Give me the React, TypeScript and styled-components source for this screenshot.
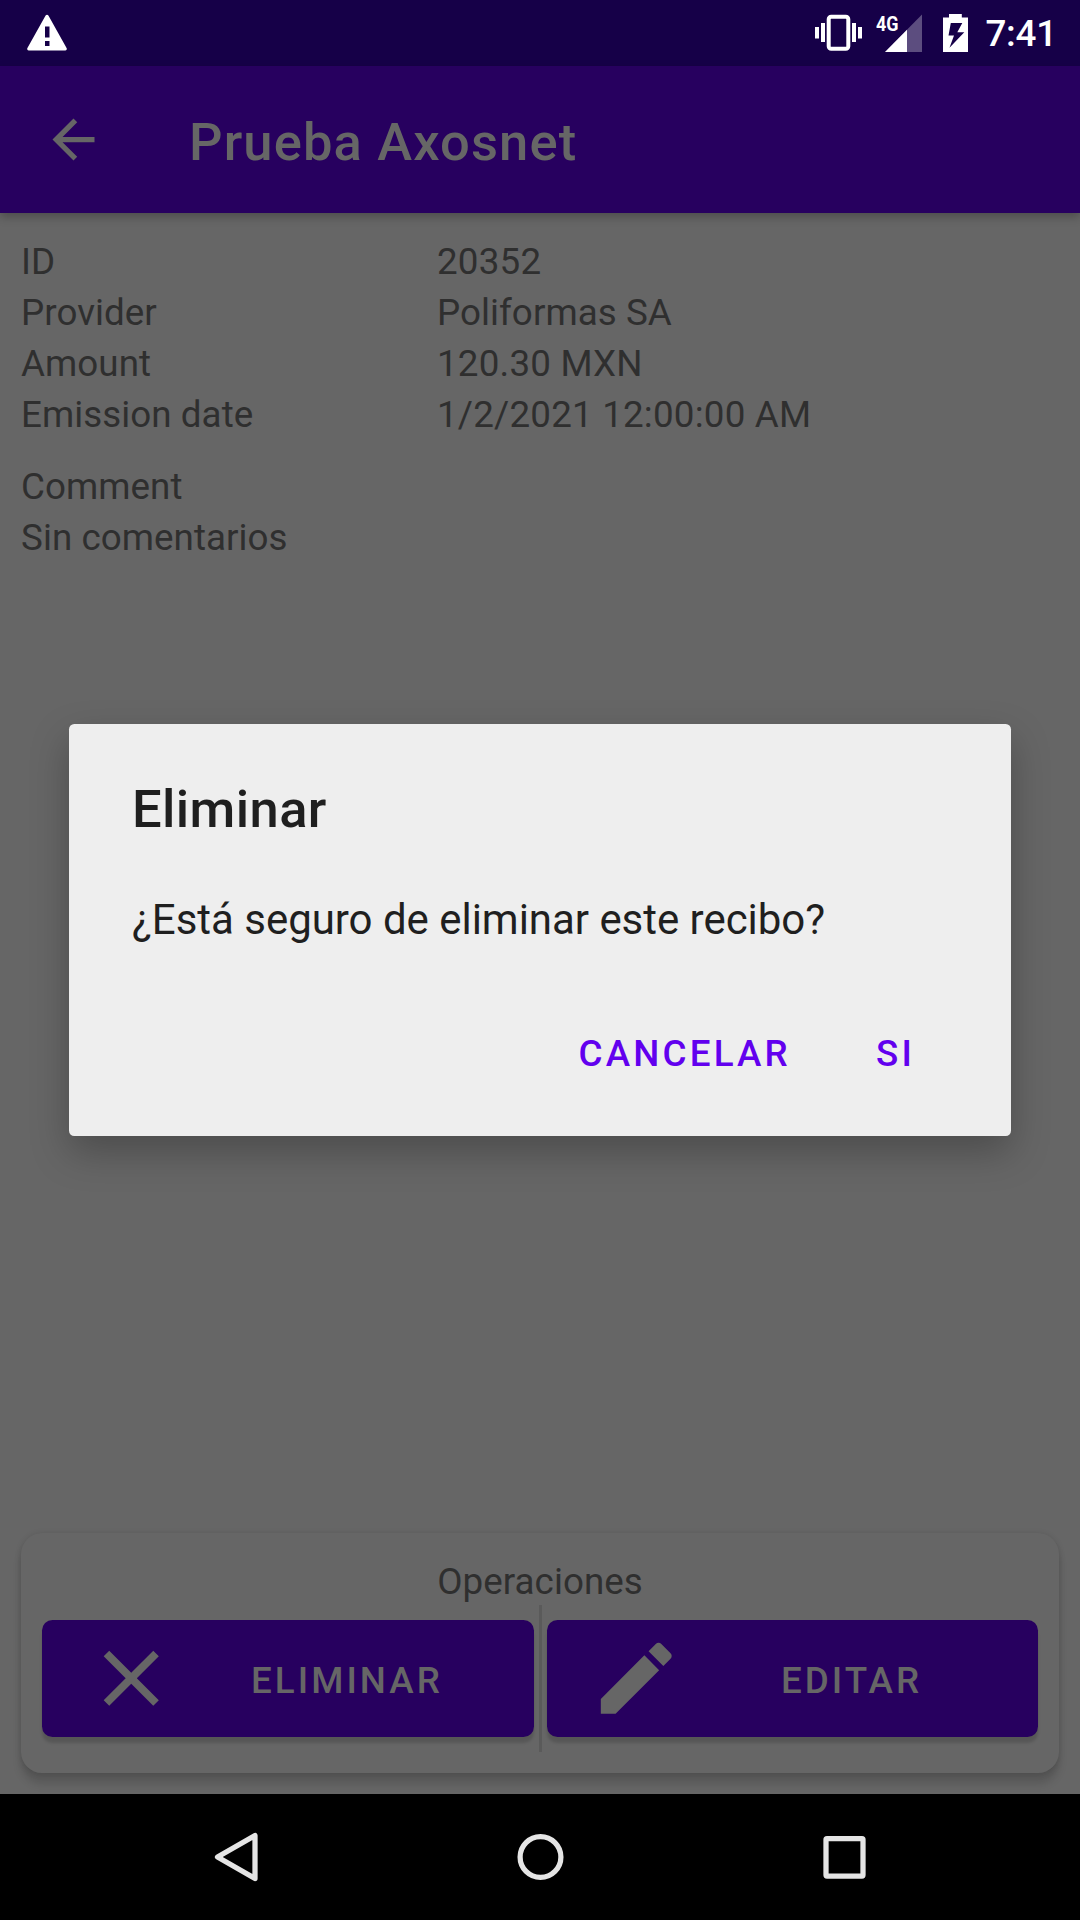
import React from "react";
import styled, { createGlobalStyle } from "styled-components";

const GlobalStyle = createGlobalStyle`
  * { box-sizing: border-box; }
  body { margin: 0; background: #000; }
`;

const Screen = styled.div`
  position: relative;
  width: 1080px;
  height: 1920px;
  display: flex;
  flex-direction: column;
  overflow: hidden;
  background: #666;
  font-family: Roboto, "Liberation Sans", sans-serif;
`;

const StatusBar = styled.header`
  display: flex;
  align-items: flex-start;
  flex: none;
  height: 66px;
  padding: 14px 23px 0 27px;
  background: #160048;
  svg { display: block; flex: none; }
`;

const StatusIcons = styled.div`
  display: flex;
  align-items: flex-start;
  margin-left: auto;
`;

const IconSlot = styled.div<{ $gap: number; $lift?: number }>`
  margin-top: ${(p) => -(p.$lift ?? 0)}px;
  margin-right: ${(p) => p.$gap}px;
`;

const Clock = styled.span`
  color: #fff;
  font-size: 36.75px;
  font-weight: 500;
  line-height: 40px;
  letter-spacing: -0.2px;
`;

const AppBar = styled.nav`
  position: relative;
  display: flex;
  align-items: center;
  flex: none;
  height: 147px;
  padding-left: 42px;
  gap: 84px;
  background: #27005f;
  box-shadow: 0 4px 9px rgba(0, 0, 0, 0.25);
`;

const Title = styled.h1`
  margin: 0;
  padding-top: 4px;
  color: #666;
  font-size: 52.5px;
  font-weight: 500;
  line-height: 60px;
  letter-spacing: 1.14px;
`;

const Content = styled.main`
  display: flex;
  flex-direction: column;
  flex: 1;
  padding: 23px 21px 21px;
`;

const Details = styled.dl`
  display: grid;
  grid-template-columns: 416px 1fr;
  margin: 0 0 21px;
`;

const Text = styled.span<{ $numeric?: boolean }>`
  display: block;
  margin: 0;
  color: #2f2f2f;
  font-size: 36.75px;
  line-height: 51px;
  letter-spacing: ${(p) => (p.$numeric ? 0.2 : 0.06)}px;
  white-space: nowrap;
`;

const Card = styled.section`
  display: flex;
  flex-direction: column;
  align-items: center;
  height: 240px;
  margin-top: auto;
  padding: 23px 21px 0;
  border-radius: 21px;
  background: #666;
  box-shadow: 0 11px 8px rgba(0, 0, 0, 0.14), 0 1px 6px rgba(0, 0, 0, 0.14);
`;

const Actions = styled.div`
  display: flex;
  align-items: center;
  align-self: stretch;
  height: 147px;
  margin-top: -2px;
  gap: 5px;
`;

const Divider = styled.div`
  width: 3px;
  height: 147px;
  background: #5a5a5a;
`;

const ActionButton = styled.button`
  display: flex;
  align-items: center;
  flex: 1;
  height: 117px;
  padding: 0 42px;
  border: 0;
  border-radius: 10.5px;
  background: #27005f;
  color: #666;
  font-family: inherit;
  font-size: 36.75px;
  font-weight: 500;
  letter-spacing: 3.05px;
  box-shadow: 0 6px 3px rgba(0, 0, 0, 0.15);
  svg { flex: none; }
`;

const ActionLabel = styled.span`
  flex: 1;
  padding: 3px 0 0 24px;
  text-align: center;
`;

const NavBar = styled.footer`
  display: flex;
  justify-content: center;
  flex: none;
  height: 126px;
  background: #000;
`;

const NavButton = styled.div`
  display: flex;
  align-items: center;
  justify-content: center;
  width: 304px;
`;

const Overlay = styled.div`
  position: absolute;
  inset: 66px 0 126px;
  display: flex;
  align-items: center;
  justify-content: center;
`;

const Dialog = styled.div`
  width: 942px;
  height: 412px;
  padding: 55px 96px 0 63px;
  border-radius: 5.25px;
  background: #eee;
  color: #1f1f1f;
  box-shadow: 0 16px 38px rgba(0, 0, 0, 0.26);
`;

const DialogTitle = styled.h2`
  margin: 0;
  font-size: 52.5px;
  font-weight: 500;
  line-height: 60px;
  letter-spacing: 0.4px;
`;

const DialogMessage = styled.p`
  margin: 56px 0 0;
  font-size: 42px;
  line-height: 50px;
  letter-spacing: -0.03px;
  white-space: nowrap;
`;

const DialogActions = styled.div`
  display: flex;
  justify-content: flex-end;
  gap: 85px;
  margin-top: 84px;
`;

const TextButton = styled.button`
  padding: 0;
  border: 0;
  background: none;
  color: #6200ee;
  font-family: inherit;
  font-size: 36.75px;
  font-weight: 500;
  line-height: 50px;
  letter-spacing: 3.2px;
`;

const fields = [
  { label: "ID", value: "20352", numeric: true },
  { label: "Provider", value: "Poliformas SA", numeric: false },
  { label: "Amount", value: "120.30 MXN", numeric: true },
  { label: "Emission date", value: "1/2/2021 12:00:00 AM", numeric: true },
];

const WarningIcon = () => (
  <svg width="40" height="38" viewBox="0 0 40 38" fill="#fff">
    <path
      fillRule="evenodd"
      d="M18.6 1.6Q20 -0.2 21.4 1.6L39.7 34.2Q40.2 36.2 38.4 36.4H1.6Q-0.2 36.2 0.3 34.2ZM18 12.5V23.5H22.5V12.5ZM18 27V32H22.5V27Z"
    />
  </svg>
);

const VibrateIcon = () => (
  <svg width="47" height="38" viewBox="0 0 47 38" fill="#fff">
    <path d="M0 13h4v11.500H0zM6 9h4v19H6zM37 9h4v19h-4zM43 13h4v11.500h-4z" />
    <rect x="13.700" y="2.700" width="19.600" height="32.100" rx="2.500" fill="none" stroke="#fff" strokeWidth="4" />
  </svg>
);

const SignalIcon = () => (
  <svg width="46" height="46" viewBox="0 -8 46 46">
    <path d="M9 38 46 0.500V38z" fill="#5c4d7f" />
    <path d="M9 38 31 15.700V38z" fill="#fff" />
    <text x="0" y="16.700" fill="#fff" fontSize="21" fontWeight="700" textLength="22.500" lengthAdjust="spacingAndGlyphs">
      4G
    </text>
  </svg>
);

const BatteryIcon = () => (
  <svg width="25" height="38" viewBox="0 0 25 38" fill="#fff">
    <path
      fillRule="evenodd"
      d="M6 0H18.800V3.400H25V38H0V3.400H6ZM7.800 9 5.500 21.500H11L6.500 33.800 21.300 18.300H14.300L19.300 9Z"
    />
  </svg>
);

const BackIcon = () => (
  <svg width="63" height="63" viewBox="0 0 24 24" fill="#666">
    <path d="M20 11H7.830l5.590-5.590L12 4l-8 8 8 8 1.410-1.410L7.830 13H20v-2z" />
  </svg>
);

const CloseIcon = () => (
  <svg width="94.500" height="94.500" viewBox="0 0 24 24" fill="#666">
    <path d="M19 6.410L17.590 5 12 10.590 6.410 5 5 6.410 10.590 12 5 17.590 6.410 19 12 13.410 17.590 19 19 17.590 13.410 12z" />
  </svg>
);

const EditIcon = () => (
  <svg width="94.500" height="94.500" viewBox="0 0 24 24" fill="#666">
    <path d="M3 17.250V21h3.750L17.810 9.940l-3.750-3.750L3 17.250zM20.710 7.040c.39-.39.39-1.020 0-1.410l-2.340-2.340c-.39-.39-1.020-.39-1.410 0l-1.830 1.830 3.750 3.750 1.830-1.830z" />
  </svg>
);

const NavIcon = ({ children }: { children: React.ReactNode }) => (
  <svg width="50" height="50" viewBox="0 0 50 50" fill="none" stroke="#e5e5e5" strokeWidth="5.250" strokeLinejoin="round">
    {children}
  </svg>
);

export default function App() {
  return (
    <>
      <GlobalStyle />
      <Screen>
        <StatusBar>
          <WarningIcon />
          <StatusIcons>
            <IconSlot $gap={14}><VibrateIcon /></IconSlot>
            <IconSlot $gap={21} $lift={8}><SignalIcon /></IconSlot>
            <IconSlot $gap={17}><BatteryIcon /></IconSlot>
            <Clock>7:41</Clock>
          </StatusIcons>
        </StatusBar>

        <AppBar>
          <BackIcon />
          <Title>Prueba Axosnet</Title>
        </AppBar>

        <Content>
          <Details>
            {fields.map(({ label, value, numeric }) => (
              <React.Fragment key={label}>
                <Text as="dt">{label}</Text>
                <Text as="dd" $numeric={numeric}>{value}</Text>
              </React.Fragment>
            ))}
          </Details>
          <Text>Comment</Text>
          <Text>Sin comentarios</Text>

          <Card>
            <Text>Operaciones</Text>
            <Actions>
              <ActionButton>
                <CloseIcon />
                <ActionLabel>ELIMINAR</ActionLabel>
              </ActionButton>
              <Divider />
              <ActionButton>
                <EditIcon />
                <ActionLabel>EDITAR</ActionLabel>
              </ActionButton>
            </Actions>
          </Card>
        </Content>

        <NavBar>
          <NavButton>
            <NavIcon><path d="M44 3.500V46.500L6.500 25z" /></NavIcon>
          </NavButton>
          <NavButton>
            <NavIcon><circle cx="25.500" cy="25" r="20.400" /></NavIcon>
          </NavButton>
          <NavButton>
            <NavIcon><rect x="7" y="6.600" width="37" height="37.500" rx="1" /></NavIcon>
          </NavButton>
        </NavBar>

        <Overlay>
          <Dialog role="dialog">
            <DialogTitle>Eliminar</DialogTitle>
            <DialogMessage>¿Está seguro de eliminar este recibo?</DialogMessage>
            <DialogActions>
              <TextButton>CANCELAR</TextButton>
              <TextButton>SI</TextButton>
            </DialogActions>
          </Dialog>
        </Overlay>
      </Screen>
    </>
  );
}
